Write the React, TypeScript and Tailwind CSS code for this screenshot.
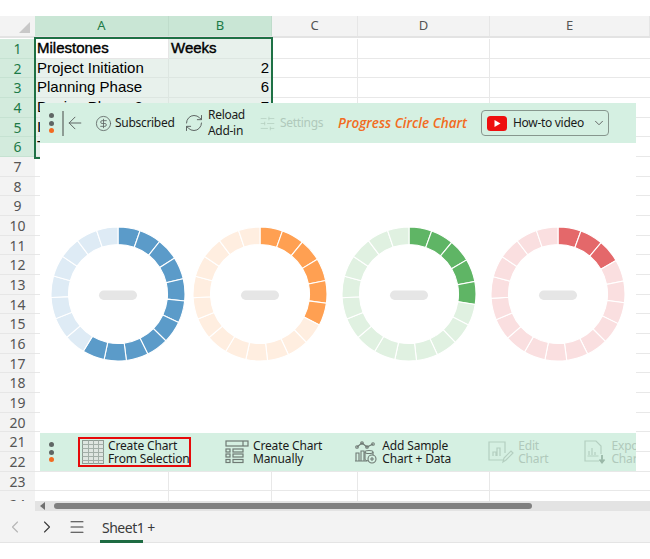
import { ArrowLeft, ChevronDown, ChevronLeft, ChevronRight, CircleDollarSign, Menu, RefreshCw, SlidersHorizontal } from "lucide-react";

const columns = [
  { name: "A", width: "w-[134px]", active: true },
  { name: "B", width: "w-[103px]", active: true },
  { name: "C", width: "w-[86px]", active: false },
  { name: "D", width: "w-[132px]", active: false },
  { name: "E", width: "w-[160px]", active: false },
];

const cells = [
  ["Milestones", "Weeks"],
  ["Project Initiation", "2"],
  ["Planning Phase", "6"],
  ["Design Phase 2", "7"],
  ["Implementation", "9"],
  ["Testing", "4"],
];

const rings = [
  { done: 11, step: 19.2, dark: "#5b9bc9", light: "#deebf5", gap: "ml-[0px]" },
  { done: 6, step: 19.6, dark: "#ffa052", light: "#ffeee0", gap: "ml-[8px]" },
  { done: 5, step: 19.8, dark: "#5fb565", light: "#e0f1e1", gap: "ml-[15px]" },
  { done: 3, step: 20, dark: "#e4686a", light: "#fadfe0", gap: "ml-[15px]" },
];

function polar(r: number, deg: number) {
  const a = (deg * Math.PI) / 180;
  return `${(67 + r * Math.sin(a)).toFixed(2)} ${(67 - r * Math.cos(a)).toFixed(2)}`;
}

function Ring({ done, step, dark, light }: { done: number; step: number; dark: string; light: string }) {
  const total = 19;
  const rest = (360 - done * step) / (total - done);
  const segments = Array.from({ length: total }, (_, i) => {
    const start = i < done ? i * step : done * step + (i - done) * rest;
    const end = i < done ? start + step : start + rest;
    return { start, end, color: i < done ? dark : light };
  });
  return (
    <svg width="134" height="134" viewBox="0 0 134 134">
      {segments.map((s) => (
        <path
          key={s.start}
          d={`M${polar(67, s.start)} A67 67 0 0 1 ${polar(67, s.end)} L${polar(49.5, s.end)} A49.5 49.5 0 0 0 ${polar(49.5, s.start)} Z`}
          fill={s.color}
          stroke="#ffffff"
          strokeWidth="1.1"
        />
      ))}
      <rect x="48" y="63.5" width="38" height="9.5" rx="4.75" fill="#e6e6e6" />
    </svg>
  );
}

function Dots() {
  return (
    <div className="flex flex-col items-center gap-[2.5px] w-[6px] shrink-0">
      <span className="w-[5px] h-[5px] rounded-full bg-[#5f6664]" />
      <span className="w-[5px] h-[5px] rounded-full bg-[#5f6664]" />
      <span className="w-[5px] h-[5px] rounded-full bg-[#f26b21]" />
    </div>
  );
}

function TableIcon() {
  return (
    <svg width="22" height="24" viewBox="0 0 22 24" fill="none" className="shrink-0">
      <rect x="0.5" y="0.5" width="21" height="23" fill="#dfe6e1" stroke="#8f9c94" />
      <path d="M0.5 4.500h21M0.5 8.500h21M0.5 12.500h21M0.500 16.500h21M0.500 20.500h21M6.500 0.500v23M11.500 0.500v23M16.500 0.500v23" stroke="#a3afa8" />
    </svg>
  );
}

function ManualIcon() {
  return (
    <svg width="24" height="24" viewBox="0 0 24 24" fill="none" stroke="#6f7a74" strokeWidth="1.2" className="shrink-0">
      <rect x="1" y="1" width="22" height="5" />
      <path d="M18 1v5" />
      <rect x="1" y="9" width="4" height="3" />
      <rect x="8" y="9" width="10" height="3" />
      <rect x="1" y="14" width="4" height="3" />
      <rect x="8" y="14" width="10" height="3" />
      <rect x="1" y="19.500" width="4" height="3" />
      <rect x="8" y="19.500" width="10" height="3" />
    </svg>
  );
}

function SampleIcon() {
  return (
    <svg width="23" height="24" viewBox="0 0 23 24" fill="none" stroke="#6f7a74" strokeWidth="1.1" className="shrink-0">
      <path d="M3 7l5-4 5 4 6-3" />
      <circle cx="3" cy="7" r="1.3" />
      <circle cx="8" cy="3" r="1.3" />
      <circle cx="13" cy="7" r="1.3" />
      <circle cx="19" cy="4" r="1.3" />
      <path d="M1 21h12M2 21v-8h3v8M7 21v-10h3v10" />
      <ellipse cx="15" cy="12" rx="4" ry="1.500" />
      <path d="M11 12v7c0 1 2 2 4 2M19 12v3" />
      <circle cx="18" cy="19" r="4" fill="#d5f0e2" />
      <path d="M18 17v4M16 19h4" />
    </svg>
  );
}

function EditIcon() {
  return (
    <svg width="26" height="23" viewBox="0 0 26 23" fill="none" stroke="#b4cfc0" strokeWidth="1.2" className="shrink-0">
      <path d="M15 19H1V1h16v11" />
      <path d="M5 15v-4h3v4M9 15V7h3v8" />
      <path d="M15 21l1-4 7-7 2 2-7 7z" />
    </svg>
  );
}

function ExportIcon() {
  return (
    <svg width="22" height="24" viewBox="0 0 22 24" fill="none" stroke="#b4cfc0" strokeWidth="1.2" className="shrink-0">
      <path d="M15 21H1V1h11l5 5v8" />
      <path d="M5 15v-4M8 15V8M11 15v-3M3.500 16h11" />
      <path d="M18 15v7M15.500 19.500l2.500 3 2.500-3" strokeWidth="1.800" stroke="#9ab8a8" />
    </svg>
  );
}

export default function App() {
  const rowNumbers = Array.from({ length: 24 }, (_, i) => i + 1);

  return (
    <div className="relative w-[650px] h-[559px] overflow-hidden bg-white font-['Liberation_Sans',sans-serif]">
      <div className="h-[16px]" />

      {/* COLUMN HEADERS */}
      <div className="flex h-[22px] bg-[#f3f3f3] border-b-2 border-[#e3e3e3]">
        <div className="w-[35px] shrink-0 flex justify-end items-end pr-[5px] pb-[3px]">
          <div className="w-0 h-0 border-l-[11px] border-l-transparent border-b-[11px] border-b-[#c8c8c8]" />
        </div>
        {columns.map((c) => (
          <div
            key={c.name}
            className={`${c.width} shrink-0 flex items-center justify-center text-[13px] font-['Noto_Sans',sans-serif] border-r ${c.active ? "bg-[#c9e6d5] text-[#1c7a47] border-[#bfdccb]" : "text-[#555555] border-[#e6e6e6]"}`}
          >
            {c.name}
          </div>
        ))}
      </div>

      {/* GRID */}
      <div className="h-[463px] pt-[1px] overflow-hidden">
        {rowNumbers.map((n) => {
          const row = cells[n - 1];
          return (
            <div key={n} className="flex h-[19.68px]">
              <div className={`w-[35px] shrink-0 flex items-center justify-center text-[14px] font-['Noto_Sans',sans-serif] border-b ${n === 24 ? "pt-[7px]" : ""} ${n <= 6 ? "bg-[#d3ebdd] text-[#1c7a47] border-[#c6e2d2]" : "bg-[#f3f3f3] text-[#555555] border-[#e6e6e6]"}`}>
                {n}
              </div>
              <div className={`w-[134px] shrink-0 flex items-center pl-[2px] text-[15px] text-black border-r border-b overflow-hidden whitespace-nowrap ${n === 1 ? "bg-white [-webkit-text-stroke:0.4px_black] border-[#e6e6e6]" : n <= 6 ? "bg-[#e8f1ec] border-[#dde6e1]" : "border-[#e8e8e8]"}`}>
                {row ? row[0] : ""}
              </div>
              <div className={`w-[103px] shrink-0 flex items-center pr-[2px] text-[15px] text-black border-r border-b ${n === 1 ? "justify-start pl-[2px] [-webkit-text-stroke:0.4px_black]" : "justify-end"} ${n <= 6 ? "bg-[#e8f1ec] border-[#dde6e1]" : "border-[#e8e8e8]"}`}>
                {row ? row[1] : ""}
              </div>
              <div className="w-[86px] shrink-0 border-r border-b border-[#e8e8e8]" />
              <div className="w-[132px] shrink-0 border-r border-b border-[#e8e8e8]" />
              <div className="w-[160px] shrink-0 border-b border-[#e8e8e8]" />
            </div>
          );
        })}
      </div>

      {/* SCROLLBAR */}
      <div className="flex h-[10px]">
        <div className="w-[35px] bg-[#f3f3f3]" />
        <div className="flex-1 bg-[#e3e3e3] flex items-center">
          <div className="ml-[5px] w-0 h-0 border-y-[4px] border-y-transparent border-r-[5px] border-r-[#707070]" />
          <div className="ml-[9px] w-[478px] h-[6px] rounded-full bg-[#808080]" />
        </div>
      </div>

      {/* SHEET TABS */}
      <div className="flex items-center h-[32px] bg-[#f3f3f3] border-b border-[#e4e4e4] text-[#3a3a3a]">
        <ChevronLeft size={20} strokeWidth={1.3} className="ml-[5px] text-[#b5b5b5]" />
        <ChevronRight size={20} strokeWidth={1.3} className="ml-[12px]" />
        <Menu size={18} strokeWidth={1.4} className="ml-[11px]" />
        <div className="relative ml-[14px] h-full flex items-center text-[14px] tracking-[-0.5px] font-['Noto_Sans',sans-serif]">
          <span className="pl-[2px] pt-[1px]">Sheet1 +</span>
          <div className="absolute left-0 bottom-[-1px] w-[43px] h-[3px] bg-[#1e6b42]" />
        </div>
      </div>

      {/* SELECTION BORDER */}
      <div className="absolute left-[34px] top-[37px] w-[239px] h-[122px] border-2 border-[#1e7145]" />

      {/* ADD-IN PANEL */}
      <div className="absolute left-[40px] top-[103px] w-[596px] h-[368px] bg-white flex flex-col font-['Noto_Sans',sans-serif] text-[12px] text-[#1a1a1a]">
        <div className="h-[40px] shrink-0 bg-[#d5f0e2] flex items-center pl-[8px] tracking-[-0.3px]">
          <Dots />
          <div className="ml-[8px] w-[2px] h-[25px] bg-[#8d9c94]" />
          <ArrowLeft size={20} strokeWidth={1.2} className="ml-[1px] text-[#5f6664]" />
          <CircleDollarSign size={17} strokeWidth={1.2} className="ml-[10px] text-[#5f6664]" />
          <span className="ml-[3px] w-[60px] whitespace-nowrap">Subscribed</span>
          <RefreshCw size={20} strokeWidth={1.2} className="ml-[9px] text-[#5f6664]" />
          <span className="ml-[4px] w-[40px] leading-[16px]">Reload Add-in</span>
          <SlidersHorizontal size={17} strokeWidth={1.1} className="ml-[11px] text-[#b4cfc0]" />
          <span className="ml-[4px] text-[#b0c9bb] w-[42px] whitespace-nowrap">Settings</span>
          <span className="ml-[16px] w-[132px] font-['Open_Sans',sans-serif] tracking-normal text-[13.5px] italic font-semibold text-[#f26b21] whitespace-nowrap">Progress Circle Chart</span>
          <div className="ml-[11px] w-[128px] h-[26px] rounded-[4px] border border-[#87978e] flex items-center pl-[5px]">
            <svg width="20" height="15" viewBox="0 0 20 15" className="shrink-0">
              <rect width="20" height="15" rx="3.500" fill="#ee0f0f" />
              <path d="M7.500 4l6 3.500-6 3.500z" fill="#ffffff" />
            </svg>
            <span className="ml-[6px] whitespace-nowrap">How-to video</span>
            <ChevronDown size={14} strokeWidth={1.5} className="ml-[8px] text-[#555555]" />
          </div>
        </div>

        <div className="flex-1 flex items-start pl-[11px] pt-[84px]">
          {rings.map((r) => (
            <div key={r.dark} className={`${r.gap} shrink-0`}>
              <Ring done={r.done} step={r.step} dark={r.dark} light={r.light} />
            </div>
          ))}
        </div>

        <div className="h-[38px] shrink-0 bg-[#d5f0e2] flex items-center pl-[8px] overflow-hidden leading-[13px] tracking-[-0.15px]">
          <Dots />
          <div className="ml-[8px] w-[2px] h-[25px] bg-[#8d9c94]" />
          <div className="ml-[16px] w-[113px] h-[30px] shrink-0 border-2 border-[#e60a0a] flex items-center pl-[2px]">
            <TableIcon />
            <span className="ml-[4px] whitespace-nowrap">Create Chart<br />From Selection</span>
          </div>
          <div className="ml-[34px] flex items-center shrink-0">
            <ManualIcon />
            <span className="ml-[4px] whitespace-nowrap">Create Chart<br />Manually</span>
          </div>
          <div className="ml-[32px] flex items-center shrink-0">
            <SampleIcon />
            <span className="ml-[5px] whitespace-nowrap">Add Sample<br />Chart + Data</span>
          </div>
          <div className="ml-[37px] flex items-center shrink-0 text-[#b0c9bb]">
            <EditIcon />
            <span className="ml-[4px] whitespace-nowrap">Edit<br />Chart</span>
          </div>
          <div className="ml-[36px] flex items-center shrink-0 text-[#b0c9bb]">
            <ExportIcon />
            <span className="ml-[5px] whitespace-nowrap">Export<br />Chart</span>
          </div>
        </div>
      </div>
    </div>
  );
}
